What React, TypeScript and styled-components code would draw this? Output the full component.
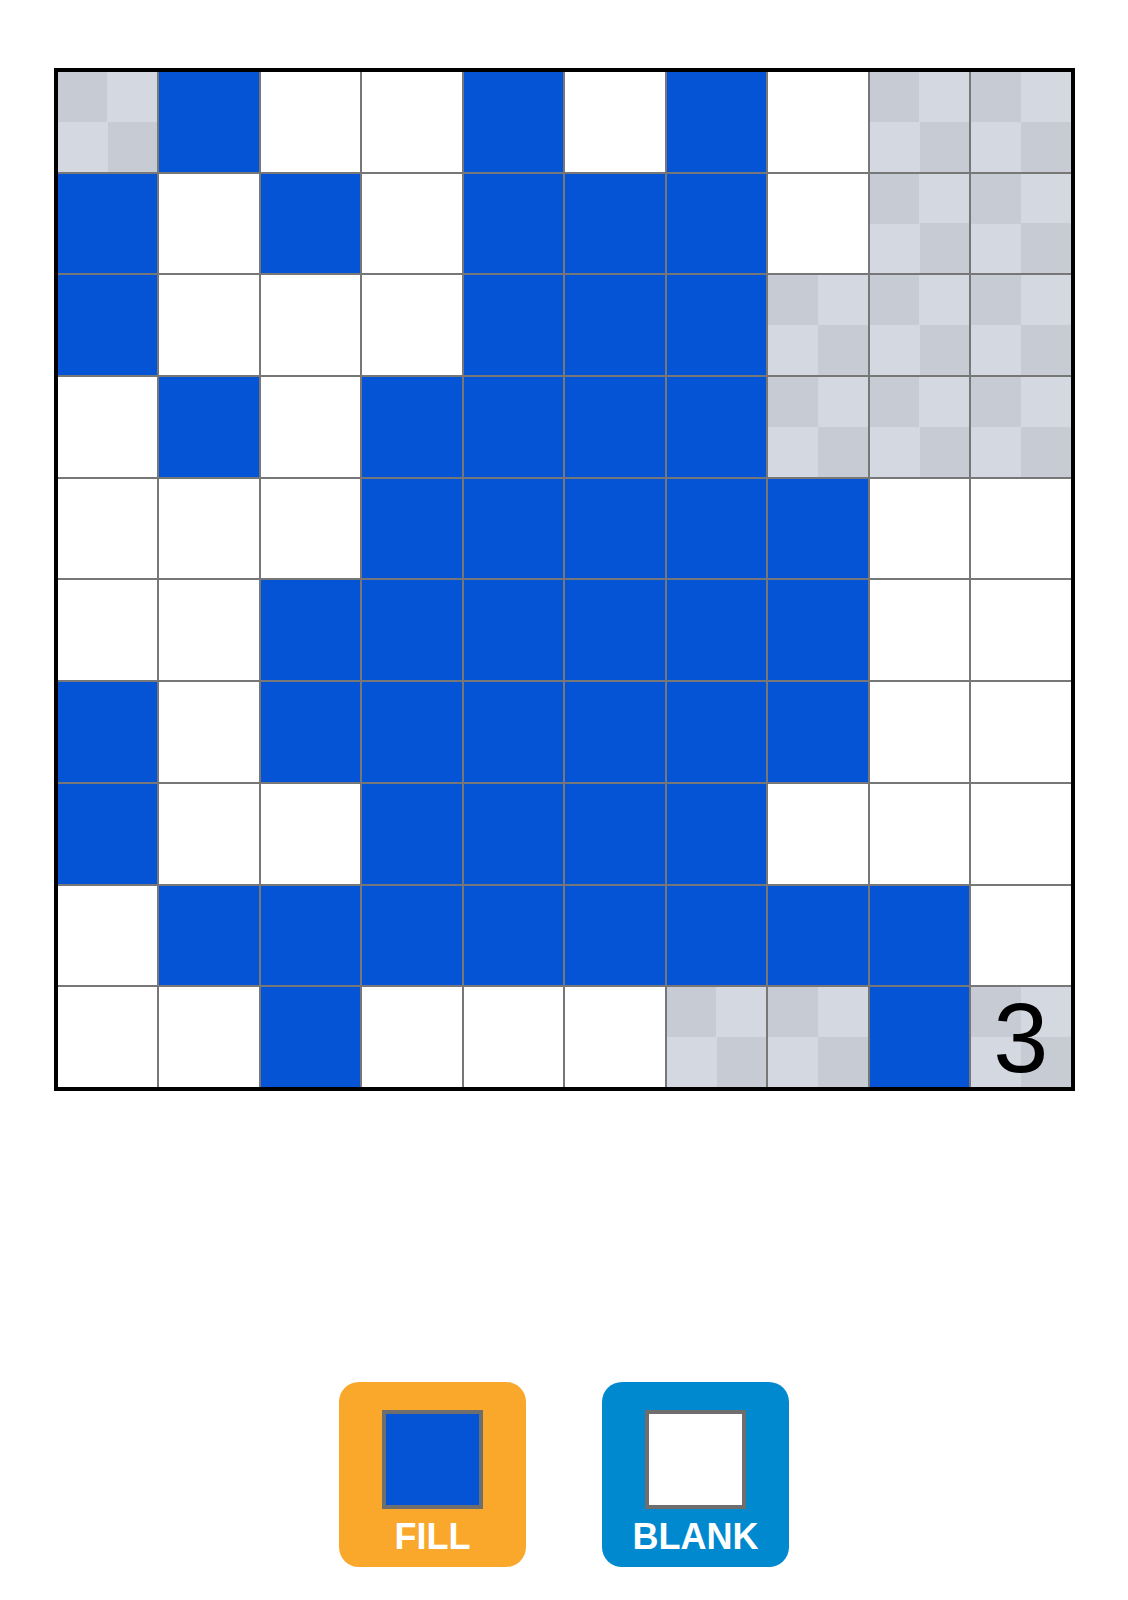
import React from "react";
import styled, { createGlobalStyle } from "styled-components";

type Cell = "B" | "W" | "C";

// Board layout, row by row
const rows: string[] = [
  "CBWWBWBWCC",
  "BWBWBBBWCC",
  "BWWWBBBCCC",
  "WBWBBBBCCC",
  "WWWBBBBBWW",
  "WWBBBBBBWW",
  "BWBBBBBBWW",
  "BWWBBBBWWW",
  "WBBBBBBBBW",
  "WWBWWWCCBC",
];

const GlobalStyle = createGlobalStyle`
  body {
    margin: 0;
    background: #fff;
    font-family: "Liberation Sans", Arial, sans-serif;
  }
`;

const Page = styled.div`
  display: flex;
  flex-direction: column;
  align-items: center;
  padding-top: 68px;
  gap: 291px;
`;

const Board = styled.div`
  width: 1021px;
  height: 1023px;
  box-sizing: border-box;
  border: 4px solid #000;
  background: #777;
  display: grid;
  grid-template-columns: repeat(10, 1fr);
  grid-template-rows: repeat(10, 1fr);
  gap: 2px;
`;

const Square = styled.div<{ $kind: Cell }>`
  display: flex;
  align-items: center;
  justify-content: center;
  background: ${({ $kind }) =>
    $kind === "B"
      ? "#0454d5"
      : $kind === "W"
      ? "#fff"
      : `conic-gradient(#d4d8e1 0 25%, #c7cbd3 0 50%, #d4d8e1 0 75%, #c7cbd3 0)`};
  color: #000;
  font-size: 99px;
  line-height: 1;
`;

const Controls = styled.div`
  display: flex;
  gap: 76px;
`;

const ToolButton = styled.button<{ $bg: string }>`
  width: 187px;
  height: 185px;
  box-sizing: border-box;
  border: none;
  border-radius: 20px;
  background: ${({ $bg }) => $bg};
  display: flex;
  flex-direction: column;
  align-items: center;
  padding: 28px 0 0;
  cursor: pointer;
`;

const Swatch = styled.div<{ $fill: string }>`
  width: 101px;
  height: 99px;
  box-sizing: border-box;
  border: 4px solid #6e6e6e;
  background: ${({ $fill }) => $fill};
`;

const Label = styled.span`
  margin-top: 10px;
  color: #fff;
  font-family: "Liberation Sans", Arial, sans-serif;
  font-weight: 700;
  font-size: 36px;
  line-height: 1;
`;

export default function App() {
  return (
    <>
      <GlobalStyle />
      <Page>
        <Board>
          {rows.map((row, r) =>
            row.split("").map((k, c) => (
              <Square key={`${r}-${c}`} $kind={k as Cell}>
                {r === 9 && c === 9 ? "3" : null}
              </Square>
            ))
          )}
        </Board>
        <Controls>
          <ToolButton $bg="#f9a82c">
            <Swatch $fill="#0454d5" />
            <Label>FILL</Label>
          </ToolButton>
          <ToolButton $bg="#0089cf">
            <Swatch $fill="#fff" />
            <Label>BLANK</Label>
          </ToolButton>
        </Controls>
      </Page>
    </>
  );
}
